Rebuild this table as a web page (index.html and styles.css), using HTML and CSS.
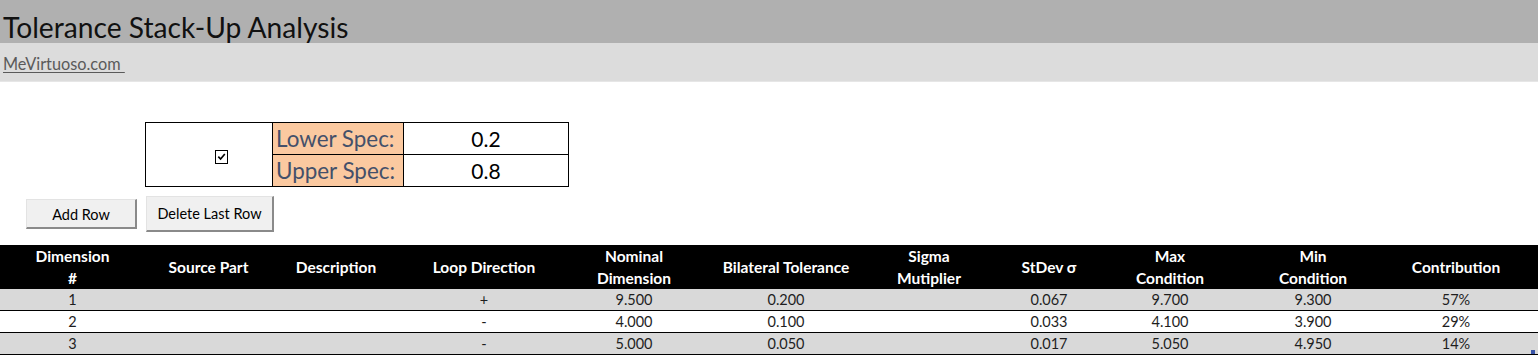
FILE: index.html
```html
<!DOCTYPE html>
<html lang="en">
<head>
<meta charset="utf-8">
<title>Tolerance Stack-Up Analysis</title>
<link rel="stylesheet" href="styles.css">
</head>
<body>
<header class="title-bar"><h1 class="title">Tolerance Stack-Up Analysis</h1></header>
<div class="link-bar"><a class="site-link" href="#">MeVirtuoso.com&nbsp;</a></div>

<section class="controls">
  <table class="spec">
    <tr>
      <td class="spec-check" rowspan="2"><span class="checkbox"><svg viewBox="0 0 12 12" width="12" height="12"><path d="M2.5 6.2 L5 8.8 L9.6 3.2" fill="none" stroke="#000" stroke-width="1.8"/></svg></span></td>
      <td class="spec-label">Lower Spec:</td>
      <td class="spec-value">0.2</td>
    </tr>
    <tr>
      <td class="spec-label">Upper Spec:</td>
      <td class="spec-value">0.8</td>
    </tr>
  </table>
  <div class="buttons">
    <button class="btn btn-add">Add Row</button>
    <button class="btn btn-del">Delete Last Row</button>
  </div>
</section>

<section class="stack">
  <table class="data">
    <colgroup>
      <col class="c1"><col class="c2"><col class="c3"><col class="c4"><col class="c5"><col class="c6"><col class="c7"><col class="c8"><col class="c9"><col class="c10"><col class="c11"><col>
    </colgroup>
    <thead>
      <tr>
        <th>Dimension<br>#</th>
        <th>Source Part</th>
        <th>Description</th>
        <th>Loop Direction</th>
        <th>Nominal<br>Dimension</th>
        <th>Bilateral Tolerance</th>
        <th>Sigma<br>Mutiplier</th>
        <th>StDev σ</th>
        <th>Max<br>Condition</th>
        <th>Min<br>Condition</th>
        <th>Contribution</th>
        <th></th>
      </tr>
    </thead>
    <tbody>
      <tr class="alt">
        <td>1</td><td></td><td></td><td>+</td><td>9.500</td><td>0.200</td><td></td><td>0.067</td><td>9.700</td><td>9.300</td><td>57%</td><td></td>
      </tr>
      <tr>
        <td>2</td><td></td><td></td><td>-</td><td>4.000</td><td>0.100</td><td></td><td>0.033</td><td>4.100</td><td>3.900</td><td>29%</td><td></td>
      </tr>
      <tr class="alt">
        <td>3</td><td></td><td></td><td>-</td><td>5.000</td><td>0.050</td><td></td><td>0.017</td><td>5.050</td><td>4.950</td><td>14%</td><td></td>
      </tr>
    </tbody>
  </table>
  <span class="resize-handle"></span>
</section>
</body>
</html>
```

FILE: styles.css
```css
html, body {
  margin: 0;
  padding: 0;
  background: #ffffff;
}
body {
  font-family: Lato, "Open Sans", "Liberation Sans", sans-serif;
  color: #000;
  width: 1538px;
}
.title-bar {
  background: #b0b0b0;
  height: 43px;
  display: flex;
  align-items: flex-end;
}
.title {
  margin: 0 0 1px 3px;
  font-weight: 400;
  font-size: 28.2px;
  line-height: 30px;
  color: #111;
}
.link-bar {
  background: #dcdcdc;
  height: 38px;
  border-bottom: 1px solid #e6e6e6;
  display: flex;
  align-items: center;
}
.site-link {
  margin-left: 3px;
  margin-top: 2px;
  font-size: 16.3px;
  color: #5a5a5a;
  text-decoration: underline;
  text-underline-offset: 2px;
}
.controls {
  padding-top: 40px;
}
.spec {
  margin-left: 145px;
  border-collapse: collapse;
  table-layout: fixed;
}
.spec td {
  border: 1px solid #000;
  padding: 0;
  height: 31px;
}
.spec-check {
  width: 126px;
  text-align: center;
  vertical-align: middle;
}
.checkbox {
  display: inline-flex;
  width: 11px;
  height: 12px;
  border: 1.5px solid #000;
  background: #fff;
  margin-left: 24px;
  margin-top: 2px;
  vertical-align: middle;
}
.checkbox svg {
  width: 11px;
  height: 11px;
}
.spec-label {
  width: 127px;
  background: #fbc9a0;
  color: #44506a;
  font-size: 22.4px;
  padding-left: 3px !important;
  white-space: nowrap;
  line-height: 30px;
}
.spec-value {
  width: 164px;
  text-align: center;
  font-size: 21px;
  line-height: 30px;
}
.buttons {
  display: flex;
  align-items: center;
  gap: 9px;
  padding-left: 26px;
  margin-top: 9px;
}
.btn {
  font-family: inherit;
  font-size: 14.5px;
  color: #000;
  background: #f0f0f0;
  border-style: solid;
  border-width: 1px 2px 2px 1px;
  border-color: #e3e3e3 #8a8a8a #8a8a8a #e3e3e3;
  padding: 0;
  border-radius: 0;
}
.btn-add {
  width: 111px;
  height: 30px;
  padding-top: 1px;
}
.btn-del {
  width: 128px;
  height: 36px;
  padding-bottom: 1px;
}
.stack {
  margin-top: 13px;
  position: relative;
}
.data {
  border-collapse: collapse;
  table-layout: fixed;
  width: 1538px;
}
.c1 { width: 145px; }
.c2 { width: 127px; }
.c3 { width: 128px; }
.c4 { width: 168px; }
.c5 { width: 132px; }
.c6 { width: 172px; }
.c7 { width: 114px; }
.c8 { width: 126px; }
.c9 { width: 116px; }
.c10 { width: 170px; }
.c11 { width: 116px; }
.data th {
  background: #000;
  color: #fff;
  font-weight: 700;
  font-size: 15.5px;
  line-height: 22px;
  height: 44px;
  padding: 0;
  text-align: center;
  vertical-align: middle;
}
.data td {
  height: 21px;
  padding: 0;
  text-align: center;
  font-size: 14.5px;
  line-height: 21px;
  color: #1e1e1e;
  border-bottom: 1px solid #000;
}
.data tr.alt td {
  background: #d9d9d9;
}
.resize-handle {
  position: absolute;
  right: 3px;
  bottom: 1px;
  width: 4px;
  height: 4px;
  background: #3a55a8;
}
```
